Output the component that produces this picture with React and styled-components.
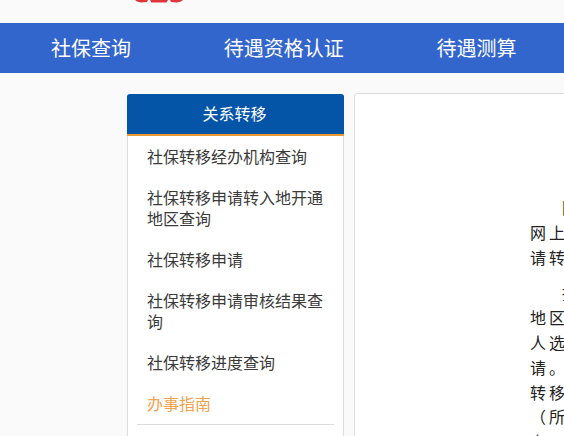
import styled, { createGlobalStyle } from 'styled-components';

const GlobalStyle = createGlobalStyle`
  html, body {
    margin: 0;
    padding: 0;
    height: 436px;
    overflow: hidden;
    background-color: #fafafa;
    font-family: 'Noto Sans CJK SC', 'Liberation Sans', sans-serif;
  }
`;

const Page = styled.div`
  width: 564px;
  height: 436px;
  overflow: hidden;
`;

const Top = styled.div`
  height: 23px;
  padding-left: 133px;
`;

const Emblem = styled.svg`
  display: block;
  width: 52px;
  height: 5px;
`;

const Nav = styled.div`
  height: 50px;
  box-sizing: border-box;
  padding: 0 0 2px 4.6px;
  background-color: #3366cc;
  display: flex;
  align-items: center;
`;

const NavItem = styled.div`
  padding: 0 46.4px;
  color: #fff;
  font-size: 20px;
  white-space: nowrap;
`;

const Body = styled.div`
  display: flex;
  align-items: flex-start;
  gap: 10px;
  padding: 20px 0 0 127px;
`;

const Sidebar = styled.div`
  flex: none;
  width: 217px;
  height: 400px;
  margin-top: 1px;
  box-sizing: border-box;
  background-color: #fff;
  border: 1px solid #ddd;
  border-top: 0;
  border-radius: 3px 3px 0 0;
`;

const SideTitle = styled.div`
  height: 40px;
  margin: 0 -1px;
  padding-right: 2px;
  background-color: #0454a8;
  border-bottom: 2px solid #e89a2f;
  border-radius: 3px 3px 0 0;
  color: #fff;
  font-size: 16px;
  line-height: 38px;
  text-align: center;
`;

const SideList = styled.div`
  padding: 10px 9px 0;
`;

const SideItem = styled.div`
  padding: 0 10px 20px;
  color: ${(p) => (p.$active ? '#f2a24c' : '#3a3a3a')};
  font-size: 16px;
  line-height: 21px;
`;

const Divider = styled.div`
  height: 1px;
  margin-top: -10px;
  background-color: #ddd;
`;

const Main = styled.div`
  flex: none;
  width: 800px;
  height: 400px;
  box-sizing: border-box;
  padding: 101px 0 0 175px;
  background-color: #fff;
  border: 1px solid #ddd;
  border-radius: 3px 0 0 0;
`;

const Para = styled.p`
  margin: 0 0 11px;
  color: #222;
  font-size: 16px;
  line-height: 24.8px;
  letter-spacing: 3px;
  text-indent: 32px;
  white-space: nowrap;
`;

const sideItems = [
  '社保转移经办机构查询',
  '社保转移申请转入地开通地区查询',
  '社保转移申请',
  '社保转移申请审核结果查询',
  '社保转移进度查询',
];

const App = () => {
  return (
    <Page>
      <GlobalStyle />
      <Top>
        <Emblem viewBox="0 0 52 5">
          <path d="M2 0h13l-1 2-6 .6-4-1zM17 0h18l-1.500 2.400h-15zM37 0h13l-2 1.600-4 1-6-.6z" fill="#e0363a" />
        </Emblem>
      </Top>
      <Nav>
        <NavItem>社保查询</NavItem>
        <NavItem>待遇资格认证</NavItem>
        <NavItem>待遇测算</NavItem>
      </Nav>
      <Body>
        <Sidebar>
          <SideTitle>关系转移</SideTitle>
          <SideList>
            {sideItems.map((item) => (
              <SideItem key={item}>{item}</SideItem>
            ))}
            <SideItem $active>办事指南</SideItem>
            <Divider />
          </SideList>
        </Sidebar>
        <Main>
          <Para>
            国<br />
            网上<br />
            请转
          </Para>
          <Para>
            持<br />
            地区<br />
            人选<br />
            请。<br />
            转移<br />
            （所<br />
            上
          </Para>
        </Main>
      </Body>
    </Page>
  );
};

export default App;
